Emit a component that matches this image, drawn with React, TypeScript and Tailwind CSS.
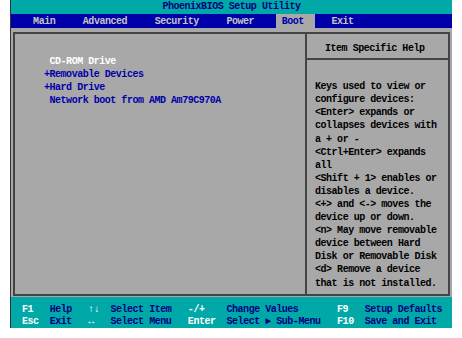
type Seg = [number, string, string];

const KEY = "text-white";
const DESC = "text-[#000080]";

const bottomRows: Seg[][] = [
  [
    [2, "F1", KEY],
    [7, "Help", DESC],
    [14, "↑↓", KEY],
    [18, "Select Item", DESC],
    [32, "-/+", KEY],
    [39, "Change Values", DESC],
    [59, "F9", KEY],
    [64, "Setup Defaults", DESC],
  ],
  [
    [2, "Esc", KEY],
    [7, "Exit", DESC],
    [14, "↔", KEY],
    [18, "Select Menu", DESC],
    [32, "Enter", KEY],
    [39, "Select ► Sub-Menu", DESC],
    [59, "F10", KEY],
    [64, "Save and Exit", DESC],
  ],
];

const helpLines = [
  "Keys used to view or",
  "configure devices:",
  "<Enter> expands or",
  "collapses devices with",
  "a + or -",
  "<Ctrl+Enter> expands",
  "all",
  "<Shift + 1> enables or",
  "disables a device.",
  "<+> and <-> moves the",
  "device up or down.",
  "<n> May move removable",
  "device between Hard",
  "Disk or Removable Disk",
  "<d> Remove a device",
  "that is not installed.",
];

const bootItems = [
  { text: " CD-ROM Drive", color: "text-white" },
  { text: "+Removable Devices", color: "text-[#0000a8]" },
  { text: "+Hard Drive", color: "text-[#0000a8]" },
  { text: " Network boot from AMD Am79C970A", color: "text-[#0000a8]" },
];

const Row = ({ segs }: { segs: Seg[] }) => {
  let pos = 0;
  return (
    <div className="leading-[12px] whitespace-pre">
      {segs.map(([col, text, cls], i) => {
        const pad = " ".repeat(Math.max(0, col - pos));
        pos = col + text.length;
        return (
          <span key={i} className={cls}>
            {pad + text}
          </span>
        );
      })}
    </div>
  );
};

export default function App() {
  return (
    <div className="ml-[10px] flex h-[328px] w-[442px] flex-col border-l border-[#333] bg-[#a8a8a8] font-['Liberation_Mono',monospace] text-[10px] font-bold tracking-[-0.475px]">
      {/* title */}
      <div className="h-[14px] bg-[#00a8a8] text-center leading-[14px] text-[#00007a]">
        PhoenixBIOS Setup Utility
      </div>

      {/* menu bar */}
      <div className="flex h-[14px] bg-[#0000a8] whitespace-pre text-[#c4c4c4]">
        <span className="pt-[1px] leading-[13px]">{"    Main     Advanced     Security     Power    "}</span>
        <span className="bg-[#a8a8a8] pt-[1px] leading-[13px] text-[#0000a8]">{" Boot  "}</span>
        <span className="pt-[1px] leading-[13px]">{"   Exit"}</span>
      </div>

      {/* body */}
      <div className="flex flex-1 flex-col px-[2px] pt-[4px] pb-[1.5px]">
        <div className="flex flex-1 border-2 border-[#444]">
          <div className="w-[292px] border-r-2 border-[#444] pt-[21px] pl-[29px]">
            {bootItems.map((item) => (
              <div key={item.text} className={`leading-[13.1px] whitespace-pre ${item.color}`}>
                {item.text}
              </div>
            ))}
          </div>
          <div className="flex flex-1 flex-col text-black">
            <div className="border-b-2 border-[#444] pt-[8px] pb-[3px] pl-[18px] leading-[13.12px]">
              Item Specific Help
            </div>
            <div className="pt-[20px] pl-[8px]">
              {helpLines.map((line) => (
                <div key={line} className="leading-[13.1px] whitespace-pre">
                  {line}
                </div>
              ))}
            </div>
          </div>
        </div>
      </div>

      {/* key legend */}
      <div className="h-[31px] bg-[#00a8a8] pt-[6.5px]">
        {bottomRows.map((segs, i) => (
          <Row key={i} segs={segs} />
        ))}
      </div>
    </div>
  );
}
